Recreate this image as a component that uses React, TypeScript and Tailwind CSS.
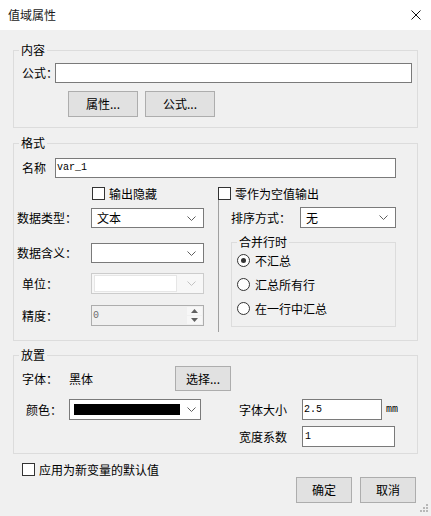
import React from 'react';

const Chevron: React.FC<{ color?: string }> = ({ color = '#5f5f5f' }) => (
  <svg width="9" height="5" viewBox="0 0 9 5" className="shrink-0">
    <path d="M0.5 0.5 L4.5 4.5 L8.5 0.5" fill="none" stroke={color} strokeWidth="1" />
  </svg>
);

const Group: React.FC<{ title: string; className?: string; children: React.ReactNode }> = ({
  title,
  className = '',
  children,
}) => (
  <div className={`mx-[13px] border border-[#dcdcdc] flex flex-col ${className}`}>
    <span className="-mt-[8px] ml-[5px] px-[2px] self-start bg-[#f0f0f0] leading-[14px]">{title}</span>
    {children}
  </div>
);

const Button: React.FC<{ label: string; className?: string }> = ({ label, className = '' }) => (
  <div
    className={`flex items-center justify-center border border-[#adadad] bg-[#e1e1e1] ${className}`}
  >
    {label}
  </div>
);

const Check: React.FC<{ label: string }> = ({ label }) => (
  <div className="flex items-center h-[13px]">
    <div className="w-[13px] h-[13px] border border-[#333333] bg-white shrink-0" />
    <span className="ml-[4px] whitespace-nowrap">{label}</span>
  </div>
);

const Radio: React.FC<{ label: string; checked?: boolean }> = ({ label, checked }) => (
  <div className="flex items-center h-[13px] gap-[5px] pl-[5px]">
    <div className="w-[13px] h-[13px] rounded-full border border-[#333333] bg-white flex items-center justify-center shrink-0">
      {checked && <div className="w-[5px] h-[5px] rounded-full bg-[#333333]" />}
    </div>
    <span>{label}</span>
  </div>
);

const Select: React.FC<{ value?: string; className?: string }> = ({ value = '', className = '' }) => (
  <div
    className={`flex items-center border border-[#7a7a7a] bg-white pl-[5px] pr-[7px] ${className}`}
  >
    <span className="flex-1">{value}</span>
    <Chevron />
  </div>
);

const mono = "font-['Liberation_Mono',monospace] text-[10px]";

export default function App() {
  return (
    <div className="relative w-[431px] h-[516px] bg-[#f0f0f0] text-[12px] leading-[14px] text-black font-['Noto_Sans_CJK_SC','Noto_Sans',sans-serif] flex flex-col overflow-hidden select-none">
      {/* Title bar */}
      <div className="h-[30px] bg-white flex items-center justify-between pl-[8px] pr-[10px] shrink-0">
        <span className="text-[#1a1a1a]">值域属性</span>
        <svg width="10" height="10" viewBox="0 0 10 10">
          <path d="M0.5 0.5 L9.5 9.5 M9.5 0.5 L0.5 9.5" stroke="#111" strokeWidth="1" />
        </svg>
      </div>

      {/* 内容 */}
      <Group title="内容" className="mt-[20px]">
        <div className="mt-[6px] flex items-center pl-[8px] pr-[5px]">
          <span className="w-[33px] shrink-0 whitespace-nowrap">公式：</span>
          <div className="relative flex-1 h-[20px] border border-[#7a7a7a] bg-white" />
        </div>
        <div className="mt-[8px] mb-[10px] flex gap-[7px] pl-[54px]">
          <Button label="属性..." className="w-[70px] h-[26px]" />
          <Button label="公式..." className="w-[70px] h-[26px]" />
        </div>
      </Group>

      {/* 格式 */}
      <Group title="格式" className="mt-[15px]">
        <div className="mt-[8px] flex items-center pl-[8px] pr-[21px]">
          <span className="w-[33px] shrink-0">名称</span>
          <div className={`flex-1 h-[20px] border border-[#7a7a7a] bg-white flex items-center pl-[1px] ${mono}`}>
            var_1
          </div>
        </div>

        <div className="mt-[9px] flex h-[13px]">
          <div className="w-[204px] pl-[78px]">
            <Check label="输出隐藏" />
          </div>
          <Check label="零作为空值输出" />
        </div>

        <div className="flex mb-[8px]">
          {/* left column */}
          <div className="w-[204px] flex flex-col">
            <div className="mt-[8px] flex items-center pl-[3px]">
              <span className="w-[74px]">数据类型：</span>
              <Select value="文本" className="w-[113px] h-[20px]" />
            </div>
            <div className="mt-[15px] flex items-center pl-[3px]">
              <span className="w-[74px]">数据含义：</span>
              <Select className="w-[113px] h-[20px]" />
            </div>
            <div className="mt-[10px] flex items-center pl-[8px]">
              <span className="w-[69px]">单位：</span>
              <div className="w-[113px] h-[21px] border border-[#cccccc] bg-[#f7f7f7] flex items-center pl-[2px] pr-[7px]">
                <div className="flex-1 h-[17px] border border-[#e6e6e6] bg-white mr-[10px]" />
                <Chevron color="#c2c2c2" />
              </div>
            </div>
            <div className="mt-[11px] flex items-center pl-[8px]">
              <span className="w-[69px]">精度：</span>
              <div className="w-[113px] h-[21px] border border-[#adadad] bg-[#f0f0f0] flex items-stretch">
                <span className={`flex-1 flex items-center pl-[1px] text-[#6d6d6d] ${mono}`}>0</span>
                <div className="w-[15px] my-[1px] mr-[1px] flex flex-col gap-[1px]">
                  <div className="flex-1 bg-[#f7f7f7] flex items-center justify-center">
                    <svg width="7" height="4" viewBox="0 0 7 4">
                      <path d="M0 4 L3.5 0 L7 4 Z" fill="#606060" />
                    </svg>
                  </div>
                  <div className="flex-1 bg-[#f7f7f7] flex items-center justify-center">
                    <svg width="7" height="4" viewBox="0 0 7 4">
                      <path d="M0 0 L3.5 4 L7 0 Z" fill="#606060" />
                    </svg>
                  </div>
                </div>
              </div>
            </div>
          </div>

          {/* separator */}
          <div className="w-[1px] h-[132px] bg-[#a0a0a0]" />

          {/* right column */}
          <div className="flex-1 flex flex-col">
            <div className="mt-[7px] flex items-center pl-[12px]">
              <span className="w-[69px]">排序方式：</span>
              <Select value="无" className="w-[96px] h-[21px]" />
            </div>
            <div className="mt-[14px] ml-[12px] w-[165px] border border-[#dcdcdc] flex flex-col pb-[11px]">
              <span className="-mt-[8px] ml-[5px] px-[2px] self-start bg-[#f0f0f0] leading-[14px]">合并行时</span>
              <div className="mt-[5px] flex flex-col gap-[11px]">
                <Radio label="不汇总" checked />
                <Radio label="汇总所有行" />
                <Radio label="在一行中汇总" />
              </div>
            </div>
          </div>
        </div>
      </Group>

      {/* 放置 */}
      <Group title="放置" className="mt-[14px] pb-[6px]">
        <div className="mt-[4px] h-[25px] flex items-center pl-[8px]">
          <span className="w-[47px]">字体：</span>
          <span className="w-[106px]">黑体</span>
          <Button label="选择..." className="w-[56px] h-[25px]" />
        </div>
        <div className="mt-[8px] h-[21px] flex items-center pl-[12px]">
          <span className="w-[43px]">颜色：</span>
          <div className="w-[132px] h-[21px] border border-[#7a7a7a] bg-white flex items-center pl-[4px] pr-[4px]">
            <div className="w-[106px] h-[11px] bg-black" />
            <div className="flex-1" />
            <Chevron />
          </div>
          <span className="ml-[38px] w-[63px]">字体大小</span>
          <div className={`w-[80px] h-[21px] border border-[#7a7a7a] bg-white flex items-center pl-[1px] ${mono}`}>
            2.5
          </div>
          <span className={`ml-[4px] ${mono}`}>mm</span>
        </div>
        <div className="mt-[6px] h-[21px] flex items-center pl-[225px]">
          <span className="w-[63px]">宽度系数</span>
          <div className={`w-[93px] h-[21px] border border-[#7a7a7a] bg-white flex items-center pl-[2px] ${mono}`}>
            1
          </div>
        </div>
      </Group>

      <div className="mt-[9px] pl-[22px]">
        <Check label="应用为新变量的默认值" />
      </div>

      <div className="mt-[1px] flex justify-end gap-[8px] pr-[15px]">
        <Button label="确定" className="w-[56px] h-[26px]" />
        <Button label="取消" className="w-[56px] h-[26px]" />
      </div>

      {/* resize grip */}
      <svg width="11" height="11" viewBox="0 0 11 11" className="absolute right-[2px] bottom-[1px]">
        <rect x="8" y="0" width="2" height="2" fill="#b8b8b8" />
        <rect x="5" y="3" width="2" height="2" fill="#b8b8b8" />
        <rect x="8" y="3" width="2" height="2" fill="#b8b8b8" />
        <rect x="2" y="6" width="2" height="2" fill="#b8b8b8" />
        <rect x="5" y="6" width="2" height="2" fill="#b8b8b8" />
        <rect x="8" y="6" width="2" height="2" fill="#b8b8b8" />
      </svg>
    </div>
  );
}
